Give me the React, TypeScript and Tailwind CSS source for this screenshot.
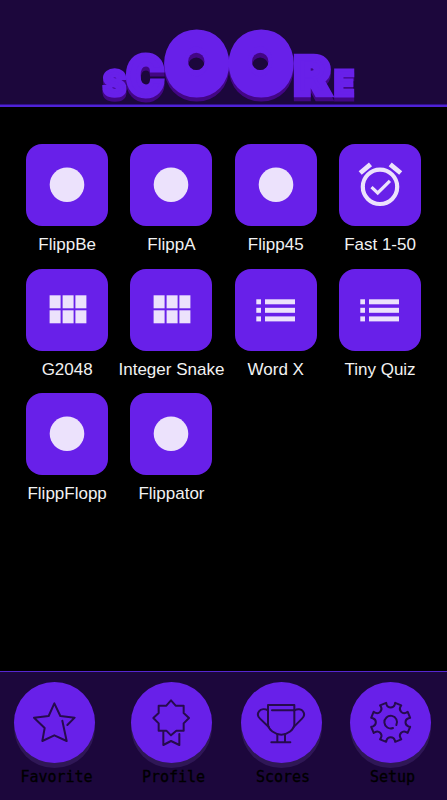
import type { ReactNode } from 'react'

type IconName = 'dot' | 'alarm' | 'grid' | 'list'

const games: { name: string, icon: IconName }[] = [
    { name: 'FlippBe', icon: 'dot' },
    { name: 'FlippA', icon: 'dot' },
    { name: 'Flipp45', icon: 'dot' },
    { name: 'Fast 1-50', icon: 'alarm' },
    { name: 'G2048', icon: 'grid' },
    { name: 'Integer Snake', icon: 'grid' },
    { name: 'Word X', icon: 'list' },
    { name: 'Tiny Quiz', icon: 'list' },
    { name: 'FlippFlopp', icon: 'dot' },
    { name: 'Flippator', icon: 'dot' },
]

// One entry per letter, all standing on the same baseline
const letters = [
    { char: 'S', x: 114.3, size: 35, sx: 0.98, stroke: 3.4, join: 'miter', font: 'Inter' },
    { char: 'C', x: 145, size: 53, sx: 0.94, stroke: 5, join: 'miter', font: 'Inter' },
    { char: 'O', x: 196.8, size: 70.7, sx: 0.95, stroke: 16, join: 'round', font: 'Lato' },
    { char: 'O', x: 261.2, size: 70.7, sx: 0.95, stroke: 16, join: 'round', font: 'Lato' },
    { char: 'R', x: 312, size: 51, sx: 1.02, stroke: 6.5, join: 'miter', font: 'Inter' },
    { char: 'E', x: 344, size: 35.5, sx: 0.93, stroke: 3, join: 'miter', font: 'Inter' },
] as const

function Logo() {
    return (
        <svg width="447" height="104" viewBox="0 0 447 104" className="overflow-visible">
            <g
                className="drop-shadow-[0_4.7px_0_#430685]"
                fill="#6820e9"
                stroke="#6820e9"
                textAnchor="middle"
                fontWeight={900}
            >
                {letters.map((l, i) => (
                    <text
                        key={i}
                        fontFamily={`${l.font}, sans-serif`}
                        fontSize={l.size}
                        strokeWidth={l.stroke}
                        strokeLinejoin={l.join}
                        transform={`translate(${l.x} ${97.3 - l.stroke / 2}) scale(${l.sx} 1)`}
                    >
                        {l.char}
                    </text>
                ))}
            </g>
            <clipPath id="hole">
                <ellipse cx="0" cy="0" rx="8.2" ry="8.6" />
            </clipPath>
            {/* Small round eyes inside the two big letters */}
            {[196.3, 260.2].map(x => (
                <g key={x} transform={`translate(${x} 61.4)`}>
                    <ellipse rx="12" ry="15" fill="#6820e9" />
                    <ellipse rx="8.2" ry="8.6" fill="#430685" />
                    <ellipse cy="4.7" rx="8.2" ry="8.6" fill="#1c073c" clipPath="url(#hole)" />
                </g>
            ))}
        </svg>
    )
}

function GameIcon({ icon }: { icon: IconName }) {
    return (
        <svg viewBox="0 0 82 82" className="size-full" fill="#ece2fc">
            {icon === 'dot' && <circle cx="41" cy="40.7" r="17.3" />}
            {icon === 'grid' && [23.6, 36.6, 49.4].map(x => (
                <g key={x}>
                    <rect x={x} y="26.3" width="11" height="13" />
                    <rect x={x} y="41.3" width="11" height="13" />
                </g>
            ))}
            {icon === 'list' && [30.3, 38.8, 47.4].map(y => (
                <g key={y}>
                    <rect x="21.3" y={y} width="4.7" height="5" />
                    <rect x="30" y={y} width="30" height="5" />
                </g>
            ))}
            {icon === 'alarm' && (
                <g fill="none" stroke="#ece2fc">
                    <circle cx="41" cy="42.8" r="17.2" strokeWidth="4.2" />
                    <path d="M32.5 43.2l6.2 5.8 12.2-12.2" strokeWidth="3.2" />
                    <path d="M21.2 29l10.3-8.6M51.2 20.4l10.5 8.6" strokeWidth="4.8" />
                </g>
            )}
        </svg>
    )
}

// Eight teeth with a round notch between each pair
function gearPath(cx: number, cy: number, r: number) {
    const pt = (deg: number, radius: number) => {
        const a = ((deg - 90) * Math.PI) / 180
        return `${(cx + radius * Math.cos(a)).toFixed(1)} ${(cy + radius * Math.sin(a)).toFixed(1)}`
    }
    let d = `M${pt(-13, r)}`
    for (let k = 0; k < 8; k++) {
        const a = k * 45
        d += ` L${pt(a - 13, r - 5)} A13 13 0 0 0 ${pt(a + 13, r - 5)} L${pt(a + 13, r)} L${pt(a + 32, r)}`
    }
    return d + 'Z'
}

const navItems: { label: string, icon: ReactNode }[] = [
    {
        label: 'Favorite',
        icon: <path d="M160 129L182 107 139 102 121 64 104 102 60 107 92 138 85 177 121 160 158 177 145 116" />,
    },
    {
        label: 'Profile',
        icon: (
            <>
                <path d="M120 55L134 71H158V93L174 108 158 124V146H136L120 160 106 146H83V124L67 108 83 93V71H106Z" />
                <path d="M97 148V189L120 177 145 189V156" />
            </>
        ),
    },
    {
        label: 'Scores',
        icon: (
            <>
                <path d="M81 69H160V127C160 143 139 158 121 158S81 143 81 127Z" />
                <path d="M93 85H160" />
                <path d="M81 85C72 80 60 80 54 88C48 96 51 104 57 110L84 136" />
                <path d="M160 85C169 80 181 80 186 88C192 96 189 104 183 110L157 136" />
                <path d="M109 157V181M132 157V181M91 181H148" />
            </>
        ),
    },
    {
        label: 'Setup',
        icon: (
            <>
                <path d={gearPath(122, 121, 60)} />
                <path d="M139 129A19 19 0 1 0 129 138" />
            </>
        ),
    },
]

export default function App() {
    return (
        <div className="flex h-[800px] w-[447px] flex-col overflow-hidden bg-black font-['Liberation_Sans',Arial,sans-serif]">
            <header className="h-[107px] shrink-0 border-b-2 border-[#4f22d6] bg-[#1c073c] shadow-[inset_0_-1px_0_#32128a]">
                <Logo />
            </header>

            <main className="grid grow auto-rows-[124.6px] grid-cols-[repeat(4,104.3px)] pl-[15px] pt-[37px]">
                {games.map(game => (
                    <div key={game.name} className="flex flex-col items-center">
                        <div className="size-[82px] shrink-0 overflow-hidden rounded-[16px] bg-[#6820e9]">
                            <GameIcon icon={game.icon} />
                        </div>
                        <span className="mt-[9px] whitespace-nowrap text-[17px] leading-5 text-[#f2f2f2]">{game.name}</span>
                    </div>
                ))}
            </main>

            <nav className="grid h-[129px] shrink-0 grid-cols-[109px_125px_94px_125px] border-t border-[#5526cf] bg-[#1c073c] pt-[10px]">
                {navItems.map(item => (
                    <div key={item.label} className="flex flex-col items-center">
                        <div className="size-[81px] shrink-0 rounded-full bg-[#6820e9] shadow-[0_5px_0_#2f1756]">
                            <svg viewBox="0 0 243 243" className="size-full" fill="none" stroke="#260b4d" strokeWidth="6" strokeLinejoin="round" strokeLinecap="round">
                                {item.icon}
                            </svg>
                        </div>
                        <span className="z-10 mt-[4px] pl-[4px] font-['DejaVu_Sans_Mono',monospace] text-[15px] leading-5 text-black [-webkit-text-stroke:0.3px_black]">{item.label}</span>
                    </div>
                ))}
            </nav>
        </div>
    )
}
